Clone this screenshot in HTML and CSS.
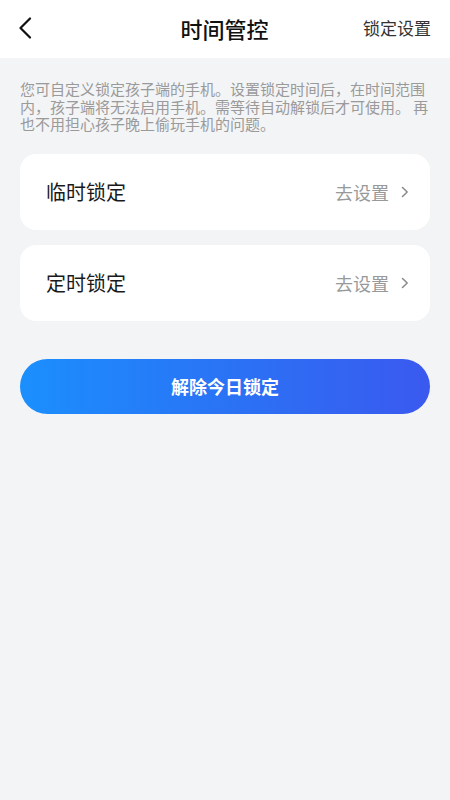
FILE: index.html
```html
<!DOCTYPE html>
<html lang="zh-CN">
<head>
<meta charset="utf-8">
<meta name="viewport" content="width=450, initial-scale=1">
<title>时间管控</title>
<link rel="stylesheet" href="styles.css">
</head>
<body>
<div class="page">
  <header class="topbar">
    <button class="back" aria-label="返回">
      <svg width="14" height="22" viewBox="0 0 14 22"><path d="M12 1.5 L2.5 11 L12 20.5" fill="none" stroke="#111" stroke-width="2.2" stroke-linecap="round" stroke-linejoin="round"/></svg>
    </button>
    <h1 class="title">时间管控</h1>
    <a class="action">锁定设置</a>
  </header>
  <main class="content">
    <p class="desc">您可自定义锁定孩子端的手机。设置锁定时间后，在时间范围内，孩子端将无法启用手机。需等待自动解锁后才可使用。 再也不用担心孩子晚上偷玩手机的问题。</p>
    <div class="card">
      <span class="label">临时锁定</span>
      <span class="go">去设置
        <svg class="chev" width="8" height="12" viewBox="0 0 8 12"><path d="M1.5 1.5 L6.2 6 L1.5 10.5" fill="none" stroke="#888" stroke-width="1.5" stroke-linecap="round" stroke-linejoin="round"/></svg>
      </span>
    </div>
    <div class="card">
      <span class="label">定时锁定</span>
      <span class="go">去设置
        <svg class="chev" width="8" height="12" viewBox="0 0 8 12"><path d="M1.5 1.5 L6.2 6 L1.5 10.5" fill="none" stroke="#888" stroke-width="1.5" stroke-linecap="round" stroke-linejoin="round"/></svg>
      </span>
    </div>
    <button class="unlock">解除今日锁定</button>
  </main>
</div>
</body>
</html>
```
FILE: styles.css
```css
* { box-sizing: border-box; }
html, body {
  margin: 0;
  padding: 0;
  background: #f3f4f6;
  font-family: "Noto Sans CJK SC", "Noto Sans", sans-serif;
}
.page {
  width: 450px;
  min-height: 800px;
  background: #f3f4f6;
}
.topbar {
  height: 58px;
  background: #fff;
  display: grid;
  grid-template-columns: 1fr auto 1fr;
  align-items: center;
  padding: 0 19px 0 18px;
}
.back {
  justify-self: start;
  background: none;
  border: 0;
  padding: 0;
  display: flex;
  align-items: center;
  height: 22px;
  margin-top: -2px;
}
.title {
  margin: 0;
  font-size: 22px;
  font-weight: 500;
  color: #111;
  line-height: 26px;
  margin-top: -3px;
}
.action {
  justify-self: end;
  font-size: 17px;
  color: #333;
  line-height: 22px;
  margin-top: -3px;
}
.content {
  padding: 22px 20px 0 20px;
  display: flex;
  flex-direction: column;
}
.desc {
  margin: 0 -1px 21px 0;
  font-size: 15px;
  line-height: 17.5px;
  color: #9a9a9a;
  line-break: loose;
}
.card {
  height: 76px;
  background: #fff;
  border-radius: 16px;
  display: flex;
  align-items: center;
  justify-content: space-between;
  padding: 0 21px 0 26px;
  margin-bottom: 15px;
}
.label {
  font-size: 20px;
  color: #1a1a1a;
  line-height: 24px;
}
.go {
  display: flex;
  align-items: center;
  gap: 12px;
  font-size: 18px;
  color: #999;
  line-height: 22px;
}
.chev { display: block; }
.unlock {
  margin-top: 23px;
  height: 55px;
  border: 0;
  border-radius: 28px;
  background: linear-gradient(90deg, #1b8ffd 0%, #2a73f5 50%, #3a59ef 100%);
  color: #fff;
  font-family: inherit;
  font-size: 18px;
  font-weight: 700;
  letter-spacing: 0;
}
```
